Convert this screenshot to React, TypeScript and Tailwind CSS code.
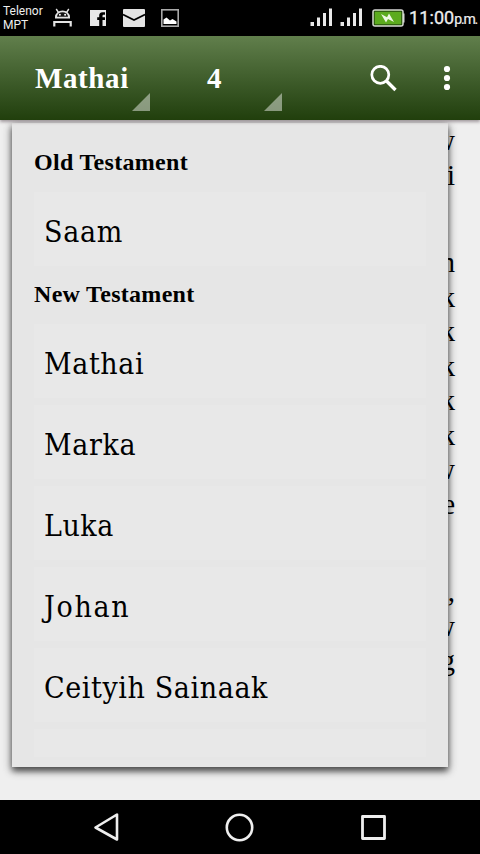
import React from 'react';

const OLD_TESTAMENT = [{ name: 'Saam', tracking: 'tracking-[0.7px]' }];

const NEW_TESTAMENT = [
  { name: 'Mathai', tracking: 'tracking-[0.6px]' },
  { name: 'Marka', tracking: 'tracking-[0.6px]' },
  { name: 'Luka', tracking: 'tracking-[0.5px]' },
  { name: 'Johan', tracking: 'tracking-[1.7px]' },
  { name: 'Ceityih Sainaak', tracking: 'tracking-[0.6px]' },
];

// Line endings of each paragraph, the rest is hidden by the menu
const PARAGRAPHS = [
  ['w', 'i'],
  ['n', 'k', 'k', 'k', 'k', 'k', 'w', 'e'],
  [',', 'w', 'g'],
];

function Signal() {
  return (
    <svg width="23" height="20" viewBox="0 0 23 20" fill="#e8e8e8">
      <rect x="0.5" y="14" width="3.5" height="4" />
      <rect x="7" y="9.5" width="3" height="8.5" />
      <rect x="13" y="5" width="3" height="13" />
      <rect x="19" y="0.5" width="3" height="17.5" />
    </svg>
  );
}

function StatusBar() {
  return (
    <div className="flex h-9 items-center bg-black pl-[3px] font-['Roboto',sans-serif] text-[#eeeeee]">
      <div className="w-[50px] whitespace-nowrap text-[12px] leading-[14px]">
        <div>Telenor</div>
        <div>MPT</div>
      </div>
      <svg className="shrink-0" width="19" height="20" viewBox="0 0 19 20">
        <path d="M2 10.500V9a7.500 6.500 0 0 1 15 0v1.500z" fill="#e4e4e4" />
        <path d="M3.200 1 5.500 4.500M15.800 1 13.500 4.500" stroke="#e4e4e4" strokeWidth="1.400" />
        <path d="M4 8.800a5.500 4.600 0 0 1 11 0z" fill="#151515" />
        <circle cx="6.900" cy="6.800" r="1" fill="#fff" />
        <circle cx="12.100" cy="6.800" r="1" fill="#fff" />
        <path d="M1.300 18.500v-4.500h16.400v4.500" fill="none" stroke="#e4e4e4" strokeWidth="2.200" />
      </svg>
      <svg className="ml-[18px] shrink-0" width="16" height="16" viewBox="0 0 16 16">
        <path fill="#e8e8e8" d="M0 0h16v16h-3.500V10H15V7.300h-2.500V6c0-.8.400-1.300 1.200-1.300H15V2.200h-2.500C10.200 2.200 9.200 3.500 9.200 5.500v1.800H7.200V10h2v6H0z" />
      </svg>
      <svg className="ml-[17px] shrink-0" width="22" height="18" viewBox="0 0 22 18">
        <rect width="22" height="18" rx="1" fill="#e4e4e4" />
        <path d="M0 5.500 11 11l11-5.500" fill="none" stroke="#000" strokeWidth="1.800" />
      </svg>
      <svg className="ml-[16px] shrink-0" width="18" height="18" viewBox="0 0 18 18">
        <rect x="0.800" y="0.800" width="16.400" height="16.400" fill="none" stroke="#aaa" strokeWidth="1.600" />
        <path d="M2.500 15v-4.500l3-2 3.500 3 2.500-1.500 4 2.500V15z" fill="#fff" />
      </svg>
      <div className="ml-[131px] flex shrink-0 gap-[7px]">
        <Signal />
        <Signal />
      </div>
      <svg className="ml-[9px] shrink-0" width="34" height="18" viewBox="0 0 34 18">
        <rect x="1" y="1" width="30" height="16" rx="2" fill="#5cab1e" stroke="#d8d8d8" strokeWidth="1.500" />
        <rect x="2.300" y="2.300" width="27.400" height="13.400" fill="none" stroke="#23440e" strokeWidth="0.800" />
        <path d="M31 4.500h1.500v9H31z" fill="#d8d8d8" />
        <path d="M9 5l6 3.200L17 4.500 22 13l-6-3-2 3.500z" fill="#eef8e4" />
      </svg>
      <div className="ml-[3px] flex items-baseline whitespace-nowrap leading-none">
        <span className="text-[18px] tracking-[0.100px] [-webkit-text-stroke:0.300px_#eeeeee]">11:00</span>
        <span className="text-[14px] tracking-[-1.200px] [-webkit-text-stroke:0.200px_#eeeeee]">p.m.</span>
      </div>
    </div>
  );
}

function Spinner({ className, children }: { className: string; children: React.ReactNode }) {
  return (
    <div className={`flex h-full items-end text-[29px] font-bold leading-[84px] ${className}`}>
      <span className="grow">{children}</span>
      <svg className="mb-[9px]" width="18" height="18" viewBox="0 0 18 18">
        <path d="M18 0v18H0z" fill="#fff" fillOpacity="0.450" />
      </svg>
    </div>
  );
}

function Toolbar() {
  return (
    <div className="relative z-20 flex h-[84px] items-center bg-linear-to-b from-[#617f4c] to-[#213f0c] pl-[35px] text-white shadow-[0_2px_3px_rgba(50,30,40,0.4)]">
      <Spinner className="w-[115px] tracking-[0.600px]">Mathai</Spinner>
      <Spinner className="w-[132px] pl-[57px]">4</Spinner>
      <svg className="ml-[88px] shrink-0" width="27" height="27" viewBox="0 0 27 27" fill="none" stroke="#fff">
        <circle cx="10.300" cy="9.800" r="8.500" strokeWidth="2.700" />
        <path d="M16.500 16l9 9" strokeWidth="3.400" />
      </svg>
      <svg className="ml-[46px] shrink-0" width="8" height="26" viewBox="0 0 8 26" fill="#fff">
        <circle cx="4" cy="4" r="3.100" />
        <circle cx="4" cy="13" r="3.100" />
        <circle cx="4" cy="22" r="3.100" />
      </svg>
    </div>
  );
}

function Heading({ children }: { children: React.ReactNode }) {
  return (
    <h2 className="h-[58px] shrink-0 text-[24px] font-bold leading-[56px] tracking-[0.300px]">
      {children}
    </h2>
  );
}

function Book({ name, tracking }: { name: string; tracking: string }) {
  return (
    <div className={`h-[74px] shrink-0 bg-[#e8e8e8] pl-[10px] font-['DejaVu_Serif_Condensed','Liberation_Serif',serif] text-[30px] leading-[80px] whitespace-nowrap ${tracking}`}>
      {name}
    </div>
  );
}

function BookMenu() {
  return (
    <div className="absolute left-3 top-[3px] z-10 h-[644px] w-[436px] bg-[#e6e6e6] px-[22px] pb-[10px] pt-[11px] text-black shadow-[0_3px_9px_rgba(0,0,0,0.45),0_4px_6px_rgba(0,0,0,0.5)]">
      <div className="flex h-full flex-col overflow-hidden">
        <Heading>Old Testament</Heading>
        {OLD_TESTAMENT.map((book) => (
          <Book key={book.name} {...book} />
        ))}
        <Heading>New Testament</Heading>
        <div className="flex flex-col gap-[7px]">
          {NEW_TESTAMENT.map((book) => (
            <Book key={book.name} {...book} />
          ))}
          <div className="h-[74px] shrink-0 bg-[#e8e8e8]" />
        </div>
      </div>
    </div>
  );
}

function NavigationBar() {
  return (
    <div className="flex h-[54px] items-center bg-black pl-[93px]">
      <svg width="28" height="30" viewBox="0 0 28 30" fill="none" stroke="#eee" strokeWidth="2.600" strokeLinejoin="round">
        <path d="M24 2.500v25L2.500 15.500z" />
      </svg>
      <svg className="ml-[104px]" width="30" height="30" viewBox="0 0 30 30" fill="none" stroke="#eee" strokeWidth="2.600">
        <circle cx="14.500" cy="15.500" r="12.700" />
      </svg>
      <svg className="ml-[105px]" width="28" height="28" viewBox="0 0 28 28" fill="none" stroke="#eee" strokeWidth="2.800" strokeLinejoin="round">
        <rect x="2.500" y="3.500" width="22" height="22" />
      </svg>
    </div>
  );
}

export default function App() {
  return (
    <div className="flex h-[854px] w-[480px] flex-col overflow-hidden bg-[#efefef] font-['Liberation_Serif',serif]">
      <StatusBar />
      <Toolbar />
      <main className="relative grow overflow-hidden">
        <div className="flex flex-col gap-[53px] pr-[25px] pt-[3px] text-right text-[29px] leading-[34.500px] text-black">
          {PARAGRAPHS.map((lines, i) => (
            <div key={i}>
              {lines.map((end, j) => (
                <div key={j}>{end}</div>
              ))}
            </div>
          ))}
        </div>
        <BookMenu />
      </main>
      <NavigationBar />
    </div>
  );
}
